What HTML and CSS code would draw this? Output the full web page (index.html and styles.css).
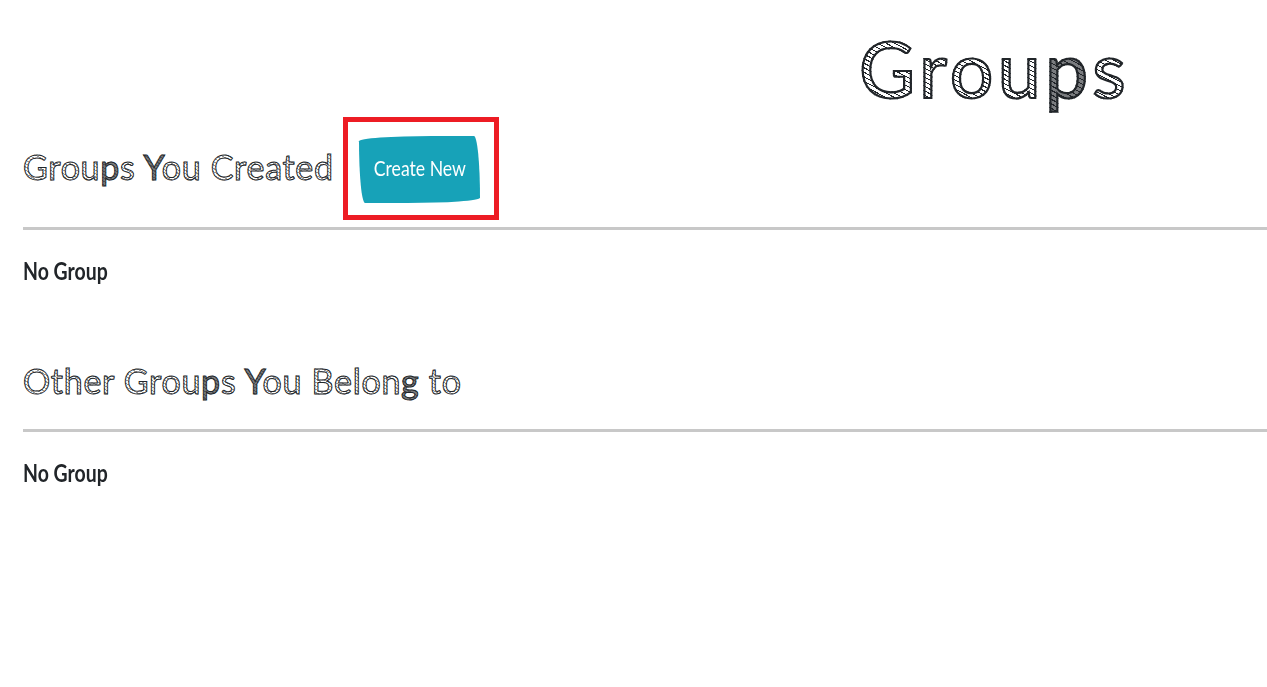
FILE: index.html
```html
<!DOCTYPE html>
<html lang="en">
<head>
<meta charset="utf-8">
<title>Groups</title>
<link rel="stylesheet" href="styles.css">
</head>
<body>
<main class="page">
  <h1 class="title sketch">Grou<span class="inked">p</span>s</h1>
  <section class="section">
    <header class="section-head">
      <h2 class="heading created sketch">Grou<span class="inked">p</span>s <span class="inked">Y</span>ou Created</h2>
      <div class="action">
        <button class="create" type="button"><span class="create-label">Create New</span></button>
      </div>
    </header>
    <h4 class="empty">No Group</h4>
  </section>
  <section class="section">
    <header class="section-head second">
      <h2 class="heading other sketch">Other Grou<span class="inked">p</span>s <span class="inked">Y</span>ou Belon<span class="inked">g</span> to</h2>
    </header>
    <h4 class="empty">No Group</h4>
  </section>
</main>
</body>
</html>
```
FILE: styles.css
```css
* { box-sizing: border-box; }
html, body { margin: 0; overflow: hidden; }
body {
  background: #fff;
  color: #212529;
  font-family: Lato, "Open Sans", sans-serif;
}
.page { height: 687px; padding-left: 23px; }
.sketch {
  margin: 0;
  white-space: nowrap;
  color: transparent;
  background: repeating-linear-gradient(28deg, #212529 0 1px, #fff 1px 4px);
  -webkit-background-clip: text;
  background-clip: text;
}
.title {
  width: 290px;
  height: 120px;
  margin: 0 0 -3px 836px;
  padding-top: 16px;
  font-size: 77px;
  font-weight: 400;
  line-height: 104px;
  letter-spacing: 4.3px;
  -webkit-text-stroke: 2.2px #212529;
}
.heading {
  font-size: 34px;
  font-weight: 400;
  line-height: 46px;
  -webkit-text-stroke: 1px #212529;
  background-image: repeating-linear-gradient(28deg, #999 0 1px, #fff 1px 3px);
}
.created { width: 320px; letter-spacing: .7px; }
.other { letter-spacing: .7px; }
.inked { color: rgba(33, 37, 41, .6); }
.section-head {
  display: flex;
  align-items: center;
  height: 113px;
  padding-bottom: 10px;
  border-bottom: 3px solid #c8c8c8;
}
.second { height: 102px; padding: 2px 0 0; }
.action {
  align-self: flex-start;
  width: 156px;
  height: 103px;
  padding: 14px 11px;
  border: 5px solid #ed1c24;
}
.create {
  display: flex;
  align-items: center;
  justify-content: center;
  width: 121px;
  height: 67px;
  padding: 0 0 3px;
  border: 0;
  border-radius: 60% 5% 60% 5% / 8% 92% 8% 92%;
  background: #17a2b8;
  color: #fff;
  font: 400 21px/30px Lato, sans-serif;
}
.create-label { white-space: nowrap; transform: scaleX(.84); }
.empty {
  width: 110px;
  height: 100px;
  margin: 0;
  padding-top: 26px;
  font-size: 24px;
  line-height: 30px;
  font-weight: 700;
  white-space: nowrap;
  transform: scaleX(.81);
  transform-origin: left;
}
```
